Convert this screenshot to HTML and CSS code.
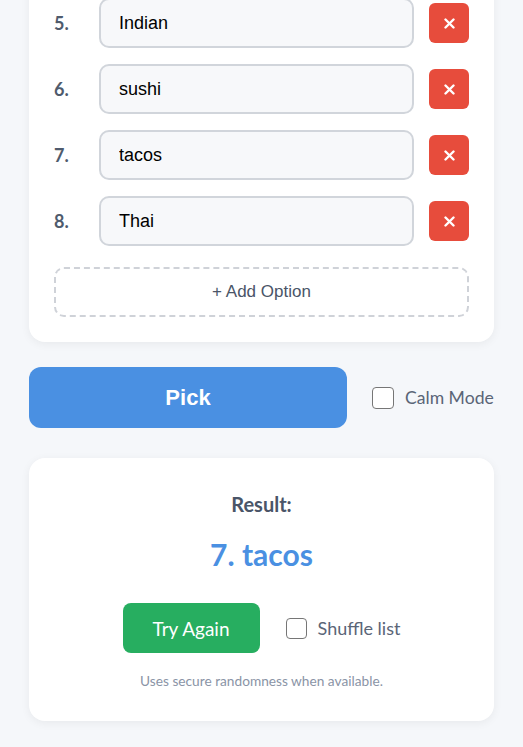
FILE: index.html
```html
<!DOCTYPE html>
<html lang="en">
<head>
<meta charset="utf-8">
<title>Picker</title>
<link rel="stylesheet" href="styles.css">
</head>
<body>
<main class="page">
  <section class="card options">
    <div class="row">
      <span class="num">5.</span>
      <input class="opt" type="text" value="Indian">
      <button class="del" aria-label="Remove"><svg width="11" height="11" viewBox="0 0 11 11"><path d="M1.5 1.5 L9.5 9.5 M9.5 1.5 L1.5 9.5" stroke="#fff" stroke-width="2.4" stroke-linecap="round"/></svg></button>
    </div>
    <div class="row">
      <span class="num">6.</span>
      <input class="opt" type="text" value="sushi">
      <button class="del" aria-label="Remove"><svg width="11" height="11" viewBox="0 0 11 11"><path d="M1.5 1.5 L9.5 9.5 M9.5 1.5 L1.5 9.5" stroke="#fff" stroke-width="2.4" stroke-linecap="round"/></svg></button>
    </div>
    <div class="row">
      <span class="num">7.</span>
      <input class="opt" type="text" value="tacos">
      <button class="del" aria-label="Remove"><svg width="11" height="11" viewBox="0 0 11 11"><path d="M1.5 1.5 L9.5 9.5 M9.5 1.5 L1.5 9.5" stroke="#fff" stroke-width="2.4" stroke-linecap="round"/></svg></button>
    </div>
    <div class="row">
      <span class="num">8.</span>
      <input class="opt" type="text" value="Thai">
      <button class="del" aria-label="Remove"><svg width="11" height="11" viewBox="0 0 11 11"><path d="M1.5 1.5 L9.5 9.5 M9.5 1.5 L1.5 9.5" stroke="#fff" stroke-width="2.4" stroke-linecap="round"/></svg></button>
    </div>
    <button class="add">+ Add Option</button>
  </section>

  <div class="actions">
    <button class="pick">Pick</button>
    <label class="check"><span class="box"></span>Calm Mode</label>
  </div>

  <section class="card result">
    <div class="result-title">Result:</div>
    <div class="result-value">7. tacos</div>
    <div class="result-actions">
      <button class="again">Try Again</button>
      <label class="check"><span class="box"></span>Shuffle list</label>
    </div>
    <p class="note">Uses secure randomness when available.</p>
  </section>
</main>
</body>
</html>
```
FILE: styles.css
```css
* { box-sizing: border-box; }

body {
  margin: 0;
  background: #f5f7fa;
  font-family: Lato, "Segoe UI", "Noto Sans", sans-serif;
  color: #333;
}

.page {
  padding: 0 29px 40px 29px;
  margin-top: -27px;
}

.card {
  background: #fff;
  border-radius: 16px;
  box-shadow: 0 2px 10px rgba(0, 0, 0, 0.06);
}

.options {
  padding: 25px;
  display: flex;
  flex-direction: column;
  gap: 16px;
}

.row {
  display: flex;
  align-items: center;
}

.num {
  width: 45px;
  flex: none;
  font-family: Lato, sans-serif;
  font-weight: 700;
  font-size: 18px;
  color: #4f5b6d;
}

.opt {
  flex: 1;
  min-width: 0;
  height: 50px;
  padding: 0 18px;
  border: 2px solid #d1d5db;
  border-radius: 10px;
  background: #f7f8fa;
  font-family: "Liberation Sans", Arial, sans-serif;
  font-size: 18px;
  color: #000;
}

.del {
  flex: none;
  width: 40px;
  height: 40px;
  margin-left: 15px;
  border: none;
  border-radius: 6px;
  background: #e74c3c;
  display: flex;
  align-items: center;
  justify-content: center;
  padding: 0;
}

.add {
  margin-top: 5px;
  height: 50px;
  border: 2px dashed #cfd2d8;
  border-radius: 10px;
  background: transparent;
  font-family: "Liberation Sans", Arial, sans-serif;
  font-size: 17px;
  color: #4a5568;
}

.actions {
  display: flex;
  align-items: center;
  gap: 25px;
  margin-top: 25px;
}

.pick {
  width: 318px;
  flex: none;
  height: 61px;
  border: none;
  border-radius: 12px;
  background: #4a90e2;
  color: #fff;
  font-family: "Liberation Sans", Arial, sans-serif;
  font-weight: 700;
  font-size: 22px;
}

.check {
  display: flex;
  align-items: center;
  gap: 11px;
  font-size: 18px;
  color: #5a6577;
  white-space: nowrap;
}

.actions .check {
  font-size: 17.6px;
}

.box {
  flex: none;
  width: 22px;
  height: 22px;
  border: 1.5px solid #767676;
  border-radius: 4px;
  background: #fff;
}

.result {
  margin-top: 30px;
  padding: 34px 25px 32px;
  text-align: center;
}

.result-title {
  font-size: 20px;
  font-weight: 700;
  color: #4a5568;
}

.result-value {
  margin-top: 20px;
  font-size: 30px;
  font-weight: 700;
  color: #4a90e2;
}

.result-actions {
  margin-top: 31px;
  display: flex;
  justify-content: center;
  align-items: center;
  gap: 26px;
}

.result-actions .check .box {
  width: 21px;
  height: 21px;
}

.again {
  height: 50px;
  padding: 0 30px;
  border: none;
  border-radius: 8px;
  background: #27ae60;
  color: #fff;
  font-family: Lato, sans-serif;
  font-size: 19px;
}

.note {
  margin: 19px 0 0;
  font-size: 13.7px;
  color: #8a94a6;
}
```
